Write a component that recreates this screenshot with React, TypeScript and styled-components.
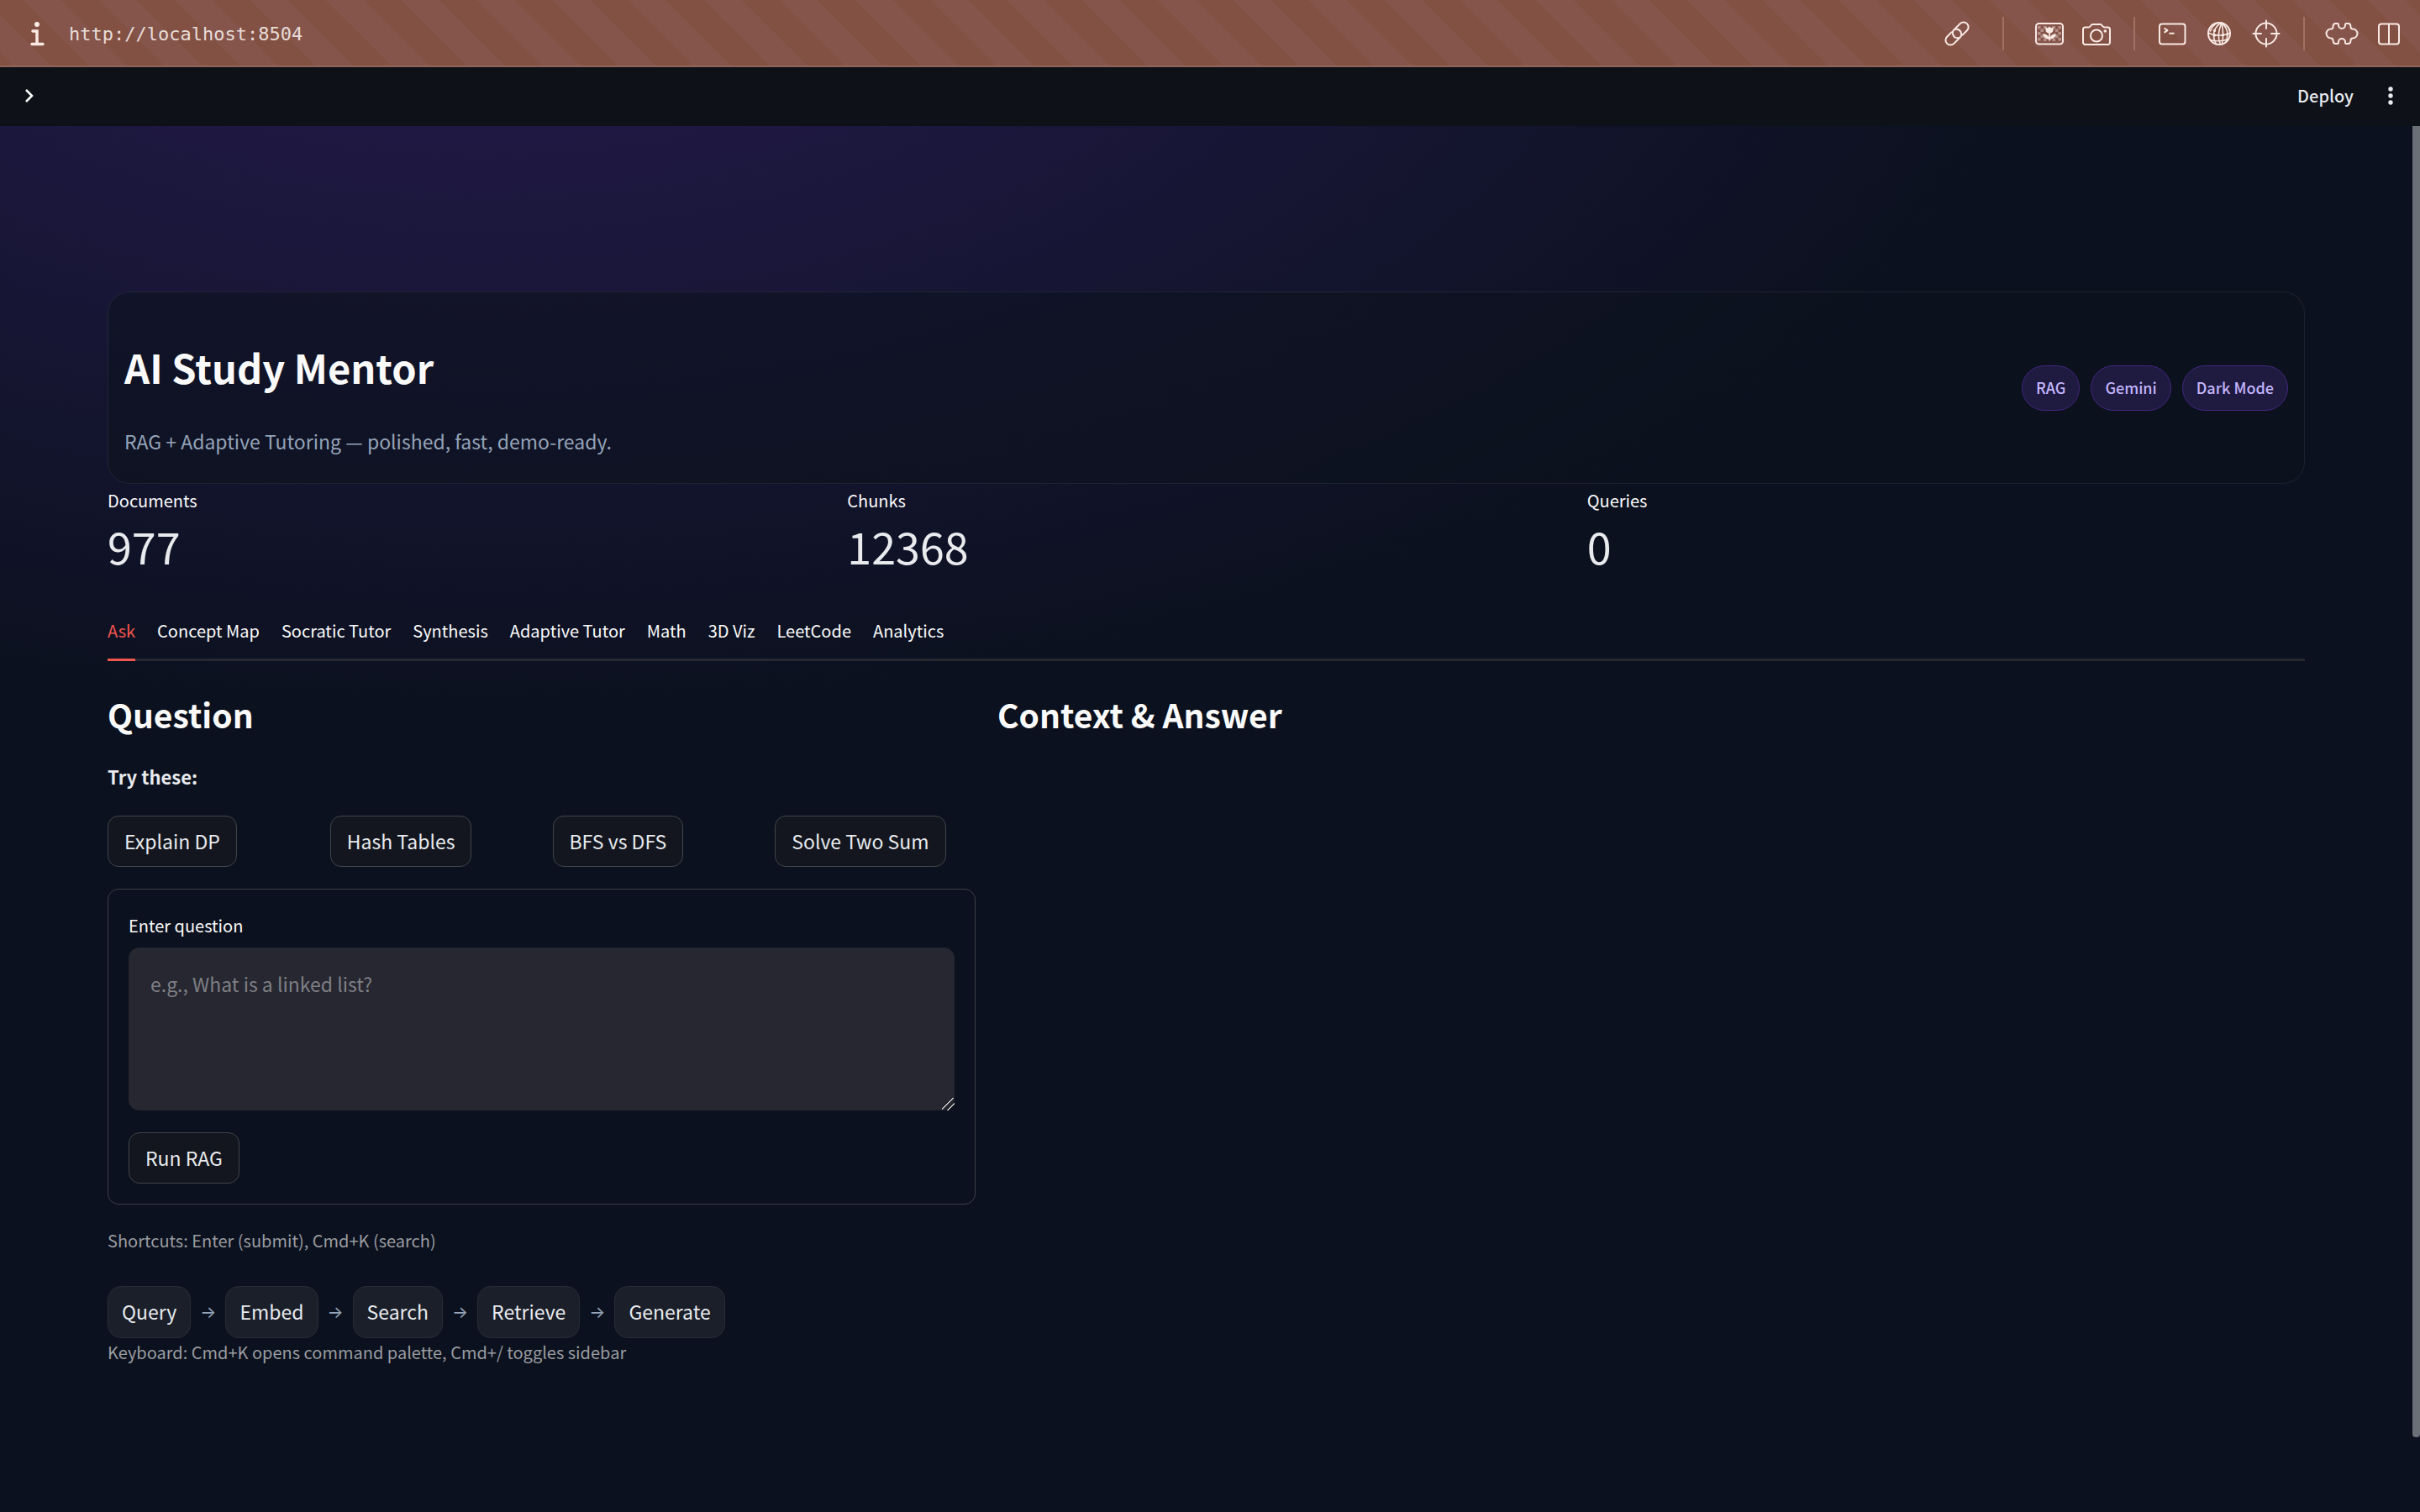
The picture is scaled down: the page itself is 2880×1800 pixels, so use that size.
import React from "react";
import styled, { createGlobalStyle } from "styled-components";

const sans = `"Noto Sans CJK SC", "Noto Sans", sans-serif`;
const mono = `"DejaVu Sans Mono", "Liberation Mono", monospace`;

const GlobalStyle = createGlobalStyle`
  *, *::before, *::after { box-sizing: border-box; }
  body { margin: 0; background: #0b111e; font-family: ${sans}; color: #fafafa; }
  h1, h2, p, dl, dd, dt, ul { margin: 0; padding: 0; }
  button, textarea { font-family: inherit; }
`;

const Shell = styled.div`
  display: flex;
  flex-direction: column;
  min-height: 100vh;
`;

/* Browser location bar */
const LocationBar = styled.div`
  display: flex;
  align-items: center;
  justify-content: space-between;
  height: 80px;
  padding: 0 9px 0 20px;
  color: #fae9e4;
  background:
    linear-gradient(#8f655a, #8f655a) 0 100% / 100% 2px no-repeat,
    linear-gradient(45deg, #85554b 25%, #825143 25% 50%, #85554b 50% 75%, #825143 75%) 18px 100% / 90px 90px;
`;

const Cluster = styled.div`
  display: flex;
  align-items: center;
`;

const IconButton = styled.button<{ $width?: number }>`
  display: flex;
  align-items: center;
  justify-content: center;
  width: ${(p) => p.$width ?? 56}px;
  height: 56px;
  padding: 0;
  border: 0;
  background: none;
  color: inherit;
`;

const Rule = styled.span<{ $gap: number }>`
  width: 2px;
  height: 40px;
  margin: 0 ${(p) => p.$gap}px;
  background: #a27164;
`;

const Url = styled.a`
  margin-left: 14px;
  padding-top: 2px;
  font: 22px/40px ${mono};
  color: #e8dcd8;
  text-decoration: none;
`;

/* App header */
const AppHeader = styled.header`
  display: flex;
  align-items: center;
  justify-content: space-between;
  height: 70px;
  padding: 0 15px 2px;
  background: #0e1117;
`;

const Deploy = styled.button`
  margin-right: 24px;
  padding: 0;
  border: 0;
  background: none;
  font-size: 20px;
  font-weight: 500;
  line-height: 38px;
  color: #e8eaed;
`;

const Viewport = styled.div`
  flex: 1;
  display: grid;
  grid-template-columns: minmax(0, 1fr) 9px;
  background: radial-gradient(1920px 960px at 20% -242px, rgba(124, 58, 237, 0.24), transparent) #0b111e;
`;

const ScrollTrack = styled.div`
  display: flex;
  flex-direction: column;
`;

const ScrollThumb = styled.div`
  flex: 0 0 94.6%;
  border-radius: 0 0 4px 4px;
  background: #6b7077;
`;

const Main = styled.main`
  padding: 197px 128px 128px;
`;

const Hero = styled.section`
  display: flex;
  align-items: center;
  justify-content: space-between;
  padding: 0 19px;
  border: 1px solid rgba(255, 255, 255, 0.07);
  border-radius: 26px;
  background: rgba(12, 18, 30, 0.55);
`;

const HeroText = styled.div`
  display: flex;
  flex-direction: column;
  gap: 37px;
  padding: 58px 0 29px;
`;

const Title = styled.h1`
  font-size: 47px;
  line-height: 62px;
  font-weight: 700;
`;

const Subtitle = styled.p`
  font-size: 23px;
  line-height: 41px;
  color: #94a3b8;
`;

const Pills = styled.ul`
  display: flex;
  gap: 13px;
  list-style: none;
`;

const Pill = styled.li`
  padding: 0 16px 2px;
  border: 1px solid #43267f;
  border-radius: 27px;
  background: #1f1a40;
  font-size: 18px;
  font-weight: 500;
  line-height: 50px;
  color: #c4b5fd;
`;

const Metrics = styled.dl`
  display: grid;
  grid-template-columns: repeat(3, 1fr);
  gap: 26px;
`;

const MetricLabel = styled.dt`
  font-size: 20px;
  line-height: 40px;
`;

const MetricValue = styled.dd`
  font-size: 52px;
  line-height: 68px;
  color: #e8eaed;
`;

const TabList = styled.div`
  display: flex;
  gap: 26px;
  margin-top: 34px;
  box-shadow: inset 0 -3px #262833;
`;

const Tab = styled.button<{ $active: boolean }>`
  height: 69px;
  padding: 0 0 2px;
  border: 0;
  border-bottom: 3px solid ${(p) => (p.$active ? "#f1554f" : "transparent")};
  background: none;
  font-size: 20px;
  color: ${(p) => (p.$active ? "#f1554f" : "#fafafa")};
`;

const Columns = styled.div`
  display: grid;
  grid-template-columns: calc(40% - 13px) minmax(0, 1fr);
  gap: 26px;
  margin-top: 36px;
`;

const Column = styled.section`
  display: flex;
  flex-direction: column;
  gap: 26px;
`;

const Heading = styled.h2`
  font-size: 39px;
  line-height: 55px;
  font-weight: 600;
`;

const Prompt = styled.p`
  font-size: 22px;
  line-height: 41px;
  font-weight: 600;
  color: #e8eaed;
`;

const Samples = styled.div`
  display: grid;
  grid-template-columns: repeat(4, 1fr);
  gap: 26px;
`;

const Button = styled.button`
  justify-self: start;
  align-self: flex-start;
  height: 61px;
  padding: 0 19px 2px;
  border: 1px solid #42444b;
  border-radius: 13px;
  background: #13161e;
  font-size: 23px;
  white-space: nowrap;
  color: #e8eaed;
`;

const Form = styled.form`
  display: flex;
  flex-direction: column;
  padding: 24px;
  border: 1px solid #3b3e48;
  border-radius: 13px;
`;

const Label = styled.label`
  margin-bottom: 7px;
  font-size: 20px;
  line-height: 38px;
`;

const TextArea = styled.textarea`
  height: 194px;
  margin-bottom: 26px;
  padding: 23px 26px;
  border: 0;
  border-radius: 13px;
  background: #262730;
  font-size: 23px;
  line-height: 41px;
  color: #fafafa;
  resize: vertical;
  &::placeholder { color: #7e7f84; opacity: 1; }
  &::-webkit-resizer {
    background: linear-gradient(
      135deg,
      transparent 38%, #101116 38% 42%, #c9c9cb 42% 49%, transparent 49% 64%,
      #101116 64% 68%, #c9c9cb 68% 75%, transparent 75%
    );
  }
`;

const Caption = styled.p`
  font-size: 20px;
  line-height: 34px;
  color: #9a9ca1;
`;

const Steps = styled.div`
  display: flex;
  align-items: center;
  gap: 11px;
  margin-top: 37px;
`;

const Step = styled.span`
  padding: 0 16px 2px;
  border: 1px solid #282c36;
  border-radius: 16px;
  background: #1a1f2a;
  font-size: 23px;
  line-height: 58px;
  color: #e8eaed;
`;

const Arrow = styled.span`
  font: 20px/60px Inter, sans-serif;
  color: #94a3b8;
`;

const Glyph = ({ children, size = 40 }: { children: React.ReactNode; size?: number }) => (
  <svg
    width={size}
    height={size}
    viewBox="-20 -20 40 40"
    fill="none"
    stroke="currentColor"
    strokeWidth="2"
    strokeLinecap="round"
    strokeLinejoin="round"
    aria-hidden="true"
  >
    {children}
  </svg>
);

const LinkGlyph = () => (
  <Glyph>
    <g transform="rotate(-45)">
      <path d="M-3.5-5.8H-11A5.8 5.8 0 0 0-11 5.8H-1A5.8 5.8 0 0 0 2.6-4.6" />
      <path d="M3.5 5.8H11A5.8 5.8 0 0 0 11-5.8H1A5.8 5.8 0 0 0-2.6 4.6" />
    </g>
  </Glyph>
);

const checker = [
  [-14, -9], [-14, -2], [-14, 5], [-10.5, -5.5], [-10.5, 1.5],
  [10.5, -9], [10.5, -2], [10.5, 5], [7, -5.5], [7, 1.5], [-7, -9], [3.5, -9], [-7, 5.5], [3.5, 5.5],
];

const PictureGlyph = () => (
  <Glyph>
    <g fill="currentColor" stroke="none" opacity="0.4">
      {checker.map(([x, y]) => (
        <rect key={`${x},${y}`} x={x} y={y} width="3.5" height="3.5" />
      ))}
    </g>
    <rect x="-16" y="-12" width="32" height="24.5" rx="3.5" />
    <path
      fill="currentColor"
      stroke="none"
      d="M-4.5-8L-2.2-6.6 0-8.4 2.2-6.6 4.5-8V-4.5C4.5-2 3-.8 .9-.5V4C2 1.5 4.5.2 8 .2 7.5 4 4.5 6.5.9 6.5V8.5H-.9V6.5C-4.5 6.5-7.5 4-8 .2-4.5.2-2 1.5-.9 4V-.5C-3-.8-4.5-2-4.5-4.5Z"
    />
  </Glyph>
);

const CameraGlyph = () => (
  <Glyph>
    <path d="M-13.5-7.5H-9.5C-7-7.5-7-11-4.5-11H4.5C7-11 7-7.5 9.5-7.5H13.5A2.5 2.5 0 0 1 16-5V10.5A2.5 2.5 0 0 1 13.5 13H-13.5A2.5 2.5 0 0 1-16 10.5V-5A2.5 2.5 0 0 1-13.5-7.5Z" />
    <circle cx="0" cy="2.5" r="7" />
    <circle cx="10.3" cy="-3" r="1.8" fill="currentColor" stroke="none" />
  </Glyph>
);

const TerminalGlyph = () => (
  <Glyph>
    <rect x="-15" y="-11.5" width="30.5" height="24" rx="3" />
    <path d="M-9.5-6.5L-5.5-3.8-9.5-1.2M-3.5-.3H2.5" strokeLinecap="butt" />
  </Glyph>
);

const GlobeGlyph = () => (
  <Glyph>
    <circle r="13" />
    <g strokeWidth="1.6">
      <path d="M3-12.7C-7-8-9 3-3.5 12.5" />
      <path d="M3-12.7C-1-4-2 5 1.5 13" />
      <path d="M3-12.7C5-4 5 4 3.5 12.5" />
      <path d="M3-12.7C10-7 11.5 1 8 10" />
      <path d="M-13-1C-6 3 6 3 13-1" />
      <path d="M-10.5 7.5C-4 9.5 5 9 11 6.5" />
      <path d="M-2-12.8C-6-11-9-7-10.5-3" />
    </g>
    <g fill="currentColor" stroke="none">
      <circle cx="-5.5" cy="-3.5" r="1.7" />
      <circle cx="-5.5" cy="2" r="1.7" />
      <circle cx="4.5" cy="1.8" r="1.7" />
      <circle cx="9.5" cy="1" r="1.5" />
    </g>
  </Glyph>
);

const TargetGlyph = () => (
  <Glyph>
    <circle r="12.5" />
    <path d="M0-15.5V-6M0 6V15.5M-15.5 0H-6M6 0H15.5" />
  </Glyph>
);

const PuzzleGlyph = () => (
  <Glyph>
    <path d="M-10.5-8Q-10.5-12-7.5-12H-5Q-4-12-4-10A4 4 0 0 0 4-10Q4-12 5-12H7.5Q10.5-12 10.5-8Q10.5-5.5 13-5.5A5.5 5.5 0 0 1 13 5.5Q10.5 5.5 10.5 8Q10.5 12 7.5 12H5Q4 12 4 10A4 4 0 0 0-4 10Q-4 12-5 12H-7.5Q-10.5 12-10.5 8Q-10.5 5.5-13 5.5A5.5 5.5 0 0 1-13-5.5Q-10.5-5.5-10.5-8Z" />
  </Glyph>
);

const PanelGlyph = () => (
  <Glyph>
    <rect x="-12" y="-11.5" width="24" height="24" rx="3" />
    <path d="M0-11V12" />
  </Glyph>
);

const InfoGlyph = () => (
  <Glyph>
    <circle cy="-11" r="3" fill="currentColor" stroke="none" />
    <path d="M-5-3H0V12.5M-6 12.5H7" strokeWidth="3.5" strokeLinejoin="miter" />
  </Glyph>
);

const metrics = [
  ["Documents", "977"],
  ["Chunks", "12368"],
  ["Queries", "0"],
];
const tabs = ["Ask", "Concept Map", "Socratic Tutor", "Synthesis", "Adaptive Tutor", "Math", "3D Viz", "LeetCode", "Analytics"];
const samples = ["Explain DP", "Hash Tables", "BFS vs DFS", "Solve Two Sum"];
const steps = ["Query", "Embed", "Search", "Retrieve", "Generate"];

export default function App() {
  return (
    <Shell>
      <GlobalStyle />
      <LocationBar>
        <Cluster>
          <IconButton $width={48} aria-label="Site information"><InfoGlyph /></IconButton>
          <Url href="http://localhost:8504">http://localhost:8504</Url>
        </Cluster>
        <Cluster>
          <IconButton aria-label="Copy link"><LinkGlyph /></IconButton>
          <Rule $gap={26} />
          <IconButton aria-label="Images"><PictureGlyph /></IconButton>
          <IconButton aria-label="Capture"><CameraGlyph /></IconButton>
          <Rule $gap={16} />
          <IconButton aria-label="Console"><TerminalGlyph /></IconButton>
          <IconButton aria-label="Network"><GlobeGlyph /></IconButton>
          <IconButton aria-label="Inspect"><TargetGlyph /></IconButton>
          <Rule $gap={16} />
          <IconButton aria-label="Extensions"><PuzzleGlyph /></IconButton>
          <IconButton aria-label="Split view"><PanelGlyph /></IconButton>
        </Cluster>
      </LocationBar>

      <AppHeader>
        <IconButton $width={40} aria-label="Open sidebar">
          <Glyph><path d="M-4-7L3 0-4 7" strokeWidth="2.6" strokeLinecap="butt" strokeLinejoin="miter" /></Glyph>
        </IconButton>
        <Cluster>
          <Deploy>Deploy</Deploy>
          <IconButton $width={40} aria-label="Main menu">
            <Glyph>
              <g fill="#e8eaed" stroke="none">
                <circle cy="-8" r="2.7" />
                <circle cy="0" r="2.7" />
                <circle cy="8" r="2.7" />
              </g>
            </Glyph>
          </IconButton>
        </Cluster>
      </AppHeader>

      <Viewport>
        <Main>
          <Hero>
            <HeroText>
              <Title>AI Study Mentor</Title>
              <Subtitle>RAG + Adaptive Tutoring — polished, fast, demo-ready.</Subtitle>
            </HeroText>
            <Pills>
              <Pill>RAG</Pill>
              <Pill>Gemini</Pill>
              <Pill>Dark Mode</Pill>
            </Pills>
          </Hero>

          <Metrics>
            {metrics.map(([label, value]) => (
              <div key={label}>
                <MetricLabel>{label}</MetricLabel>
                <MetricValue>{value}</MetricValue>
              </div>
            ))}
          </Metrics>

          <TabList role="tablist">
            {tabs.map((tab, i) => (
              <Tab key={tab} role="tab" aria-selected={i === 0} $active={i === 0}>{tab}</Tab>
            ))}
          </TabList>

          <Columns>
            <Column>
              <Heading>Question</Heading>
              <Prompt>Try these:</Prompt>
              <Samples>
                {samples.map((s) => <Button key={s} type="button">{s}</Button>)}
              </Samples>
              <Form onSubmit={(e) => e.preventDefault()}>
                <Label htmlFor="question">Enter question</Label>
                <TextArea id="question" placeholder="e.g., What is a linked list?" />
                <Button type="submit">Run RAG</Button>
              </Form>
              <Caption>Shortcuts: Enter (submit), Cmd+K (search)</Caption>
            </Column>
            <Column>
              <Heading>Context &amp; Answer</Heading>
            </Column>
          </Columns>

          <Steps>
            {steps.map((step, i) => (
              <React.Fragment key={step}>
                {i > 0 && <Arrow>→</Arrow>}
                <Step>{step}</Step>
              </React.Fragment>
            ))}
          </Steps>
          <Caption>Keyboard: Cmd+K opens command palette, Cmd+/ toggles sidebar</Caption>
        </Main>
        <ScrollTrack>
          <ScrollThumb />
        </ScrollTrack>
      </Viewport>
    </Shell>
  );
}
